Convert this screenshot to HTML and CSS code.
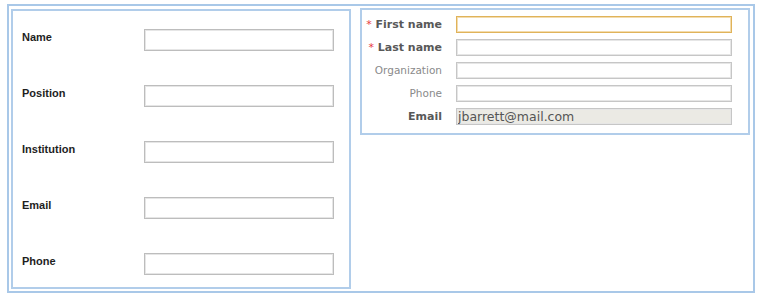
FILE: index.html
```html
<html>
  <head>
    <title>Contact forms</title>
    <link rel="stylesheet" href="styles.css">
  </head>
  <body>
    <div class="frame">
      <div class="panel legacy">
        <div class="row"><label>Name</label><input type="text"></div>
        <div class="row"><label>Position</label><input type="text"></div>
        <div class="row"><label>Institution</label><input type="text"></div>
        <div class="row"><label>Email</label><input type="text"></div>
        <div class="row"><label>Phone</label><input type="text"></div>
      </div>
      <div class="panel profile">
        <div class="field"><label class="req"><span class="star">*</span> First name</label><input type="text" class="focus"></div>
        <div class="field"><label class="req"><span class="star">*</span> Last name</label><input type="text"></div>
        <div class="field"><label class="opt">Organization</label><input type="text"></div>
        <div class="field"><label class="opt">Phone</label><input type="text"></div>
        <div class="field"><label class="req">Email</label><input type="text" class="locked" value="jbarrett@mail.com" readonly></div>
      </div>
    </div>
  </body>
</html>
```
FILE: styles.css
```css
body {margin:0; background:#fff;}
.frame {
  margin: 4px 0 0 7px;
  width: 748px;
  height: 289px;
  box-sizing: border-box;
  border: 2px solid #a9c8e8;
  display: flex;
  align-items: flex-start;
  gap: 9px;
  padding: 2px 3px 0 2px;
}
.panel {
  box-sizing: border-box;
  border: 2px solid #b1cdea;
}
input {
  box-sizing: border-box;
  margin: 0;
  background: #fff;
  border: 1px solid #bdbdbd;
  box-shadow: inset 0 0 0 1px #e6e6e6;
  outline: none;
}

/* left form */
.legacy {
  width: 340px;
  height: 280px;
  margin-top: 1px;
  padding: 18px 0 0 9px;
  display: flex;
  flex-direction: column;
  gap: 34px;
}
.legacy .row {display: flex; align-items: flex-start;}
.legacy label {
  width: 122px;
  margin-top: 2px;
  font: bold 11px/13px "Liberation Sans", Arial, sans-serif;
  color: #1e1e1e;
}
.legacy input {width: 190px; height: 22px;}

/* right form */
.profile {
  width: 390px;
  height: 127px;
  padding: 6px 0 0 0;
  display: flex;
  flex-direction: column;
  gap: 6px;
}
.profile .field {display: flex; align-items: center; gap: 14px;}
.profile label {
  width: 80px;
  text-align: right;
  white-space: nowrap;
  font-family: "DejaVu Sans", Verdana, sans-serif;
  line-height: 17px;
}
.profile .req {font-size: 11px; font-weight: bold; color: #585858;}
.profile .opt {font-size: 10.5px; color: #8a8a8a;}
.star {color: #e8383d; font-weight: normal;}
.profile input {width: 276px; height: 17px; border-color: #c6c6c6;}
.profile input.focus {border-color: #e0b35a; box-shadow: inset 0 0 0 1px #f3dcae;}
.profile input.locked {
  background: #ebeae4;
  padding: 0 0 0 1px;
  font: 12.5px/15px "DejaVu Sans", Verdana, sans-serif;
  color: #555;
}
```
